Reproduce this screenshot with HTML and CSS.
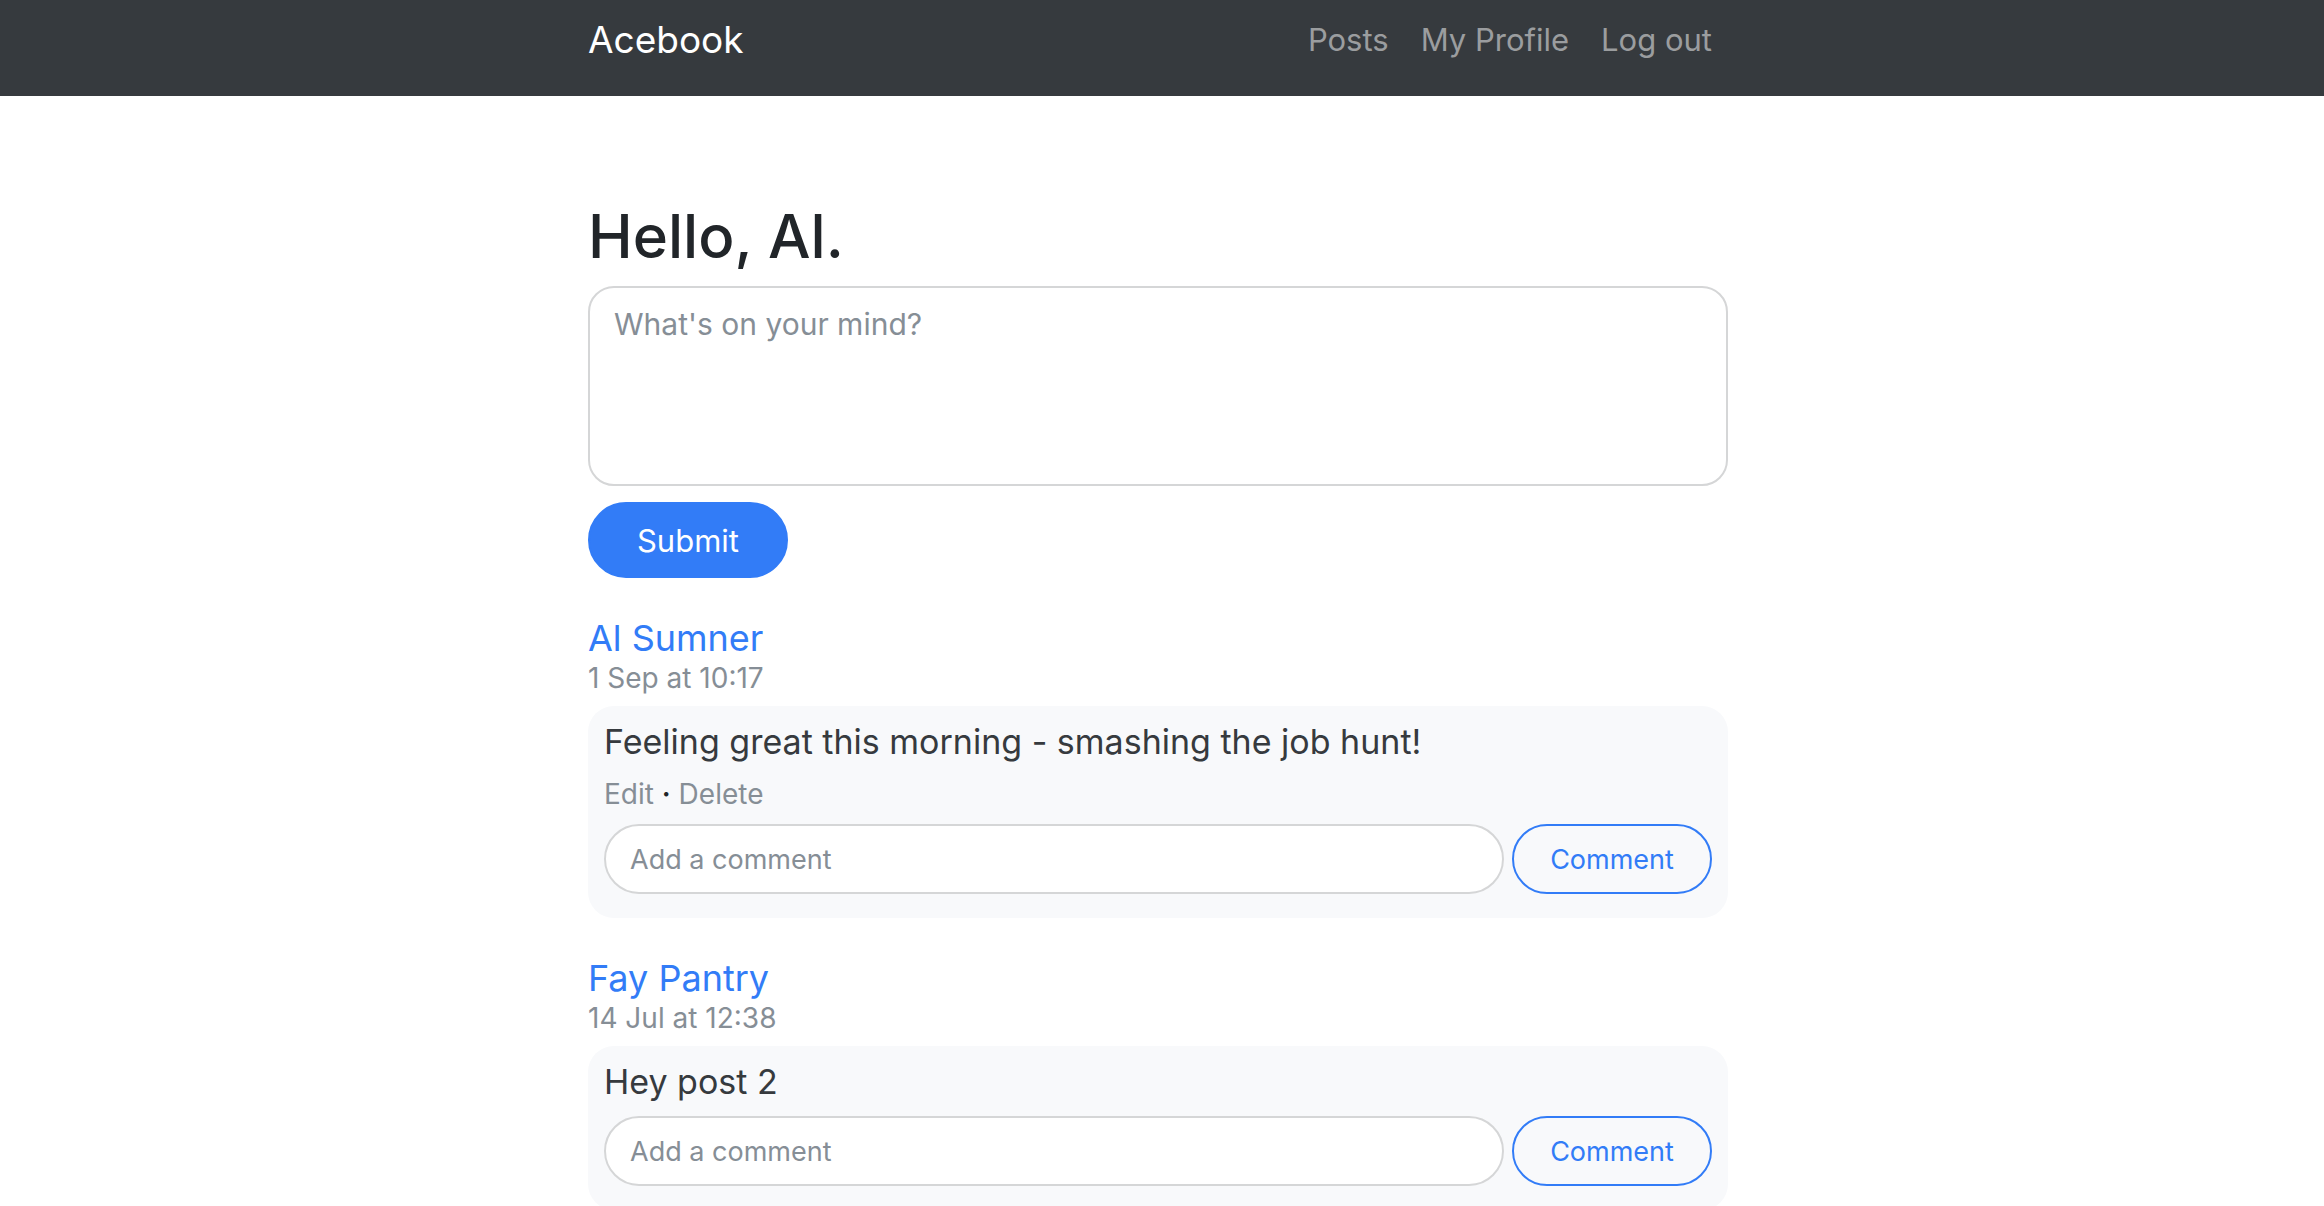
FILE: index.html
```html
<!DOCTYPE html>
<html lang="en">
<head>
  <meta charset="utf-8">
  <meta name="viewport" content="width=device-width, initial-scale=1">
  <title>Acebook</title>
  <link rel="stylesheet" href="styles.css">
</head>
<body>
  <header class="navbar">
    <div class="container navbar-inner">
      <a class="brand" href="#">Acebook</a>
      <nav class="nav">
        <a class="nav-link" href="#">Posts</a>
        <a class="nav-link" href="#">My Profile</a>
        <a class="nav-link" href="#">Log out</a>
      </nav>
    </div>
  </header>

  <main class="container">
    <h1 class="greeting">Hello, Al.</h1>
    <form class="post-form">
      <textarea class="post-input" aria-label="New post" placeholder="What's on your mind?"></textarea>
      <button class="btn btn-primary" type="button">Submit</button>
    </form>

    <article class="post">
      <a class="post-author" href="#">Al Sumner</a>
      <div class="post-date">1 Sep at 10:17</div>
      <div class="card">
        <p class="post-text">Feeling great this morning - smashing the job hunt!</p>
        <div class="post-actions"><a class="action" href="#">Edit</a> <span class="dot">·</span> <a class="action" href="#">Delete</a></div>
        <form class="comment-form">
          <input class="comment-input" type="text" aria-label="Comment on Al Sumner's post" placeholder="Add a comment">
          <button class="btn btn-outline" type="button">Comment</button>
        </form>
      </div>
    </article>

    <article class="post">
      <a class="post-author" href="#">Fay Pantry</a>
      <div class="post-date">14 Jul at 12:38</div>
      <div class="card">
        <p class="post-text">Hey post 2</p>
        <form class="comment-form">
          <input class="comment-input" type="text" aria-label="Comment on Fay Pantry's post" placeholder="Add a comment">
          <button class="btn btn-outline" type="button">Comment</button>
        </form>
      </div>
    </article>
  </main>
</body>
</html>
```
FILE: styles.css
```css
* {
  box-sizing: border-box;
}

:root {
  --blue: #327cf7;
  --dark: #363a3e;
  --muted: #868e96;
  --line: #d5d6d7;
}

html {
  scrollbar-width: none;
}

body {
  margin: 0;
  background: #fff;
  color: #212529;
  font-family: Inter, "Liberation Sans", sans-serif;
}

a {
  text-decoration: none;
}

.container {
  max-width: 1140px;
  margin: 0 auto;
}

.navbar,
main.container {
  padding-right: 8px;
}

main.container {
  max-width: 1148px;
  padding-top: 102px;
}

.navbar {
  background: var(--dark);
  padding-top: 16px;
  padding-bottom: 32px;
}

.navbar-inner {
  display: flex;
  align-items: center;
  justify-content: space-between;
  padding-right: 16px;
}

.brand {
  color: #fff;
  font-size: 37px;
  line-height: 48px;
}

.nav {
  display: flex;
  gap: 32px;
}

.nav-link {
  color: #9b9d9f;
  font-size: 31px;
  line-height: 48px;
}

.greeting {
  margin: 0 0 12px;
  font-size: 60px;
  font-weight: 500;
  line-height: 76px;
}

.post-form {
  display: flex;
  flex-direction: column;
  align-items: flex-start;
  gap: 16px;
}

.post-input,
.comment-input {
  border: 2px solid var(--line);
  background: #fff;
  color: #495057;
  font-family: inherit;
  outline: 0;
}

.post-input {
  width: 100%;
  height: 200px;
  padding: 12px 24px;
  border-radius: 26px;
  font-size: 30px;
  line-height: 48px;
  resize: none;
}

::placeholder {
  color: var(--muted);
  opacity: 1;
}

.btn {
  width: 200px;
  padding: 0;
  border: 2px solid var(--blue);
  border-radius: 38px;
  font-family: inherit;
  cursor: pointer;
}

.btn-primary {
  height: 76px;
  background: var(--blue);
  color: #fff;
  font-size: 31px;
}

.btn-outline {
  height: 70px;
  background: transparent;
  color: var(--blue);
  font-size: 27px;
}

.post {
  margin-top: 38px;
}

.post-author {
  display: block;
  width: fit-content;
  color: var(--blue);
  font-size: 36px;
  line-height: 44px;
}

.post-date {
  margin-bottom: 10px;
  color: var(--muted);
  font-size: 28px;
  line-height: 36px;
}

.card {
  padding: 12px 16px 24px;
  border-radius: 26px;
  background: #f8f9fb;
}

.post-text {
  margin: 0;
  color: var(--dark);
  font-size: 34px;
  line-height: 48px;
}

.post-actions {
  margin-top: 8px;
  font-size: 28px;
  line-height: 40px;
}

.action {
  color: var(--muted);
}

.dot {
  font-weight: 600;
}

.comment-form {
  display: flex;
  gap: 8px;
  margin-top: 10px;
}

.comment-input {
  flex: 1;
  min-width: 0;
  height: 70px;
  padding: 0 24px;
  border-radius: 35px;
  font-size: 27px;
}
```
